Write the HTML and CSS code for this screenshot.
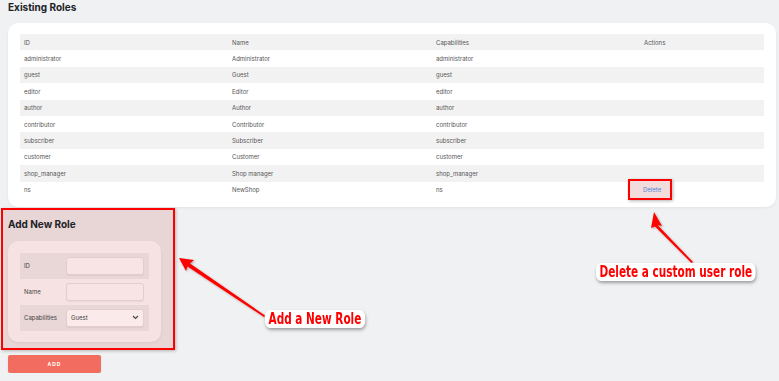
FILE: index.html
```html
<!DOCTYPE html>
<html>
<head>
<meta charset="utf-8">
<link rel="stylesheet" href="styles.css">
</head>
<body>
<div class="page">
  <h2 class="title">Existing Roles</h2>
  <div class="card">
    <table class="roles">
      <colgroup><col class="c1"><col class="c2"><col class="c3"><col class="c4"></colgroup>
      <thead>
        <tr><th>ID</th><th>Name</th><th>Capabilities</th><th>Actions</th></tr>
      </thead>
      <tbody>
        <tr><td>administrator</td><td>Administrator</td><td>administrator</td><td></td></tr>
        <tr><td>guest</td><td>Guest</td><td>guest</td><td></td></tr>
        <tr><td>editor</td><td>Editor</td><td>editor</td><td></td></tr>
        <tr><td>author</td><td>Author</td><td>author</td><td></td></tr>
        <tr><td>contributor</td><td>Contributor</td><td>contributor</td><td></td></tr>
        <tr><td>subscriber</td><td>Subscriber</td><td>subscriber</td><td></td></tr>
        <tr><td>customer</td><td>Customer</td><td>customer</td><td></td></tr>
        <tr><td>shop_manager</td><td>Shop manager</td><td>shop_manager</td><td></td></tr>
        <tr><td>ns</td><td>NewShop</td><td>ns</td><td><span class="delete">Delete</span></td></tr>
      </tbody>
    </table>
  </div>

  <section class="add-role">
    <h2 class="add-title">Add New Role</h2>
    <div class="form-card">
      <table class="form">
        <tr class="odd"><td class="lbl">ID</td><td><div class="input"></div></td></tr>
        <tr><td class="lbl">Name</td><td><div class="input"></div></td></tr>
        <tr class="odd"><td class="lbl">Capabilities</td><td><div class="input select"><span>Guest</span>
          <svg width="7" height="5" viewBox="0 0 7 5"><path d="M1 1l2.5 2.5L6 1" fill="none" stroke="#444" stroke-width="1.1"/></svg></div></td></tr>
      </table>
    </div>
  </section>
  <button class="add-btn">ADD</button>
</div>

<svg class="arrows" width="779" height="381" viewBox="0 0 779 381">
  <defs>
    <filter id="sh" x="-20%" y="-20%" width="140%" height="140%">
      <feDropShadow dx="1" dy="1" stdDeviation="0.8" flood-color="#000" flood-opacity="0.3"/>
    </filter>
  </defs>
  <g fill="#f00" filter="url(#sh)">
    <polygon points="179,258 194,260 190,263.5 265,315.5 264,317 187.5,266.5 186,271"/>
    <polygon points="654,212 662,226 657.5,225 693,262 691.5,263 655,226.5 651,228"/>
  </g>
</svg>
<div class="note note1">Add a New Role</div>
<div class="note note2">Delete a custom user role</div>
</body>
</html>
```

FILE: styles.css
```css
html, body {
  margin: 0;
  padding: 0;
  background: #f0f1f3;
  font-family: Inter, "Noto Sans", sans-serif;
  color: #555;
}
.page {
  padding: 0 8px;
  width: 768px;
}
.title {
  margin: 0;
  padding-top: 1px;
  font-size: 10px;
  line-height: 12px;
  font-weight: 700;
  color: #1d2327;
}
.card {
  margin-top: 10px;
  background: #fff;
  border-radius: 10px;
  padding: 11px 12px 9px;
  width: 744px;
  box-shadow: 0 1px 3px rgba(0,0,0,0.06);
}
.roles {
  width: 744px;
  border-collapse: collapse;
  table-layout: fixed;
  font-size: 6px;
}
.c1 { width: 208px; }
.c2 { width: 204px; }
.c3 { width: 208px; }
.c4 { width: 124px; }
.roles th, .roles td {
  height: 16.4px;
  padding: 0 4px;
  text-align: left;
  font-weight: 400;
  white-space: nowrap;
  vertical-align: middle;
}
.roles thead tr, .roles tbody tr:nth-child(even) {
  background: #f2f2f2;
}
.delete {
  display: inline-block;
  margin: -3px 0 -3px -16px;
  padding: 0 9px 0 13px;
  height: 17px;
  line-height: 17px;
  border: 2px solid #f00;
  background: #f3dcdc;
  color: #4f86d9;
  box-shadow: 1px 1px 3px rgba(0,0,0,0.3);
}
.add-role {
  margin: 1px 0 0 -7px;
  width: 161px;
  border: 2px solid #f00;
  background: #e8d5d5;
  padding: 9px 4px 6px 5px;
  box-shadow: 1px 1px 3px rgba(0,0,0,0.25);
}
.add-title {
  margin: 0 0 11px;
  font-size: 10px;
  line-height: 11px;
  font-weight: 700;
  color: #1d2327;
}
.form-card {
  width: 129px;
  background: #f6e2e2;
  border-radius: 10px;
  padding: 12px;
  padding-bottom: 11px;
  box-shadow: 0 1px 3px rgba(0,0,0,0.06);
}
.form {
  width: 129px;
  border-collapse: collapse;
  font-size: 6px;
  color: #444;
}
.form tr { height: 26px; }
.form tr.odd { background: #e9d6d6; }
.form td { padding: 0; vertical-align: middle; }
.form td.lbl { padding-left: 4px; width: 42px; }
.input {
  width: 76px;
  height: 16px;
  background: #f8e4e4;
  border: 1px solid #e3cdcd;
  border-radius: 3px;
  box-shadow: 0 1px 1px rgba(0,0,0,0.05);
}
.select {
  display: flex;
  align-items: center;
  justify-content: space-between;
  padding: 0 4px 0 4px;
  width: 68px;
  background: #fbeaea;
}
.add-btn {
  display: block;
  margin-top: 5px;
  width: 93px;
  height: 18px;
  border: none;
  border-radius: 2px;
  background: #f26d60;
  color: #fff;
  font-family: Inter, sans-serif;
  font-size: 5px;
  font-weight: 700;
  letter-spacing: 1px;
  box-shadow: 0 1px 2px rgba(0,0,0,0.1);
  padding: 0;
}
.arrows {
  position: absolute;
  left: 0;
  top: 0;
  pointer-events: none;
}
.note {
  position: absolute;
  font-family: "DejaVu Sans", sans-serif;
  font-weight: 700;
  color: #f00;
  font-size: 15px;
  line-height: 16px;
  white-space: nowrap;
  background: #fff;
  border-radius: 7px;
  padding: 1px 5px;
  box-shadow: 1px 2px 4px rgba(0,0,0,0.35);
  transform: scaleX(0.7);
  transform-origin: left top;
}
.note1 { left: 265px; top: 310px; }
.note2 { left: 596px; top: 263px; }
```
